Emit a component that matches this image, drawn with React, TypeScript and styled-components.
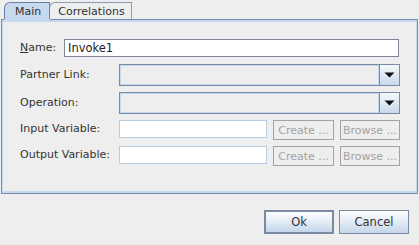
import styled, { createGlobalStyle } from 'styled-components';

const Global = createGlobalStyle`
  html, body {
    margin: 0;
    padding: 0;
    background: #eeeeee;
    font-family: 'DejaVu Sans', 'Liberation Sans', sans-serif;
    font-size: 11px;
    color: #333333;
  }
`;

const Dialog = styled.div`
  width: 419px;
  height: 245px;
  display: flex;
  flex-direction: column;
  padding: 2px 1px 0 1px;
  box-sizing: border-box;
`;

const TabStrip = styled.div`
  display: flex;
  align-items: flex-end;
  height: 17px;
  padding-left: 3px;
`;

const Tab = styled.div<{ $active?: boolean }>`
  position: relative;
  height: 17px;
  box-sizing: border-box;
  padding: 0 ${(p) => (p.$active ? 8 : 6)}px 0 ${(p) => (p.$active ? 10 : 8)}px;
  display: flex;
  align-items: center;
  border: 1px solid ${(p) => (p.$active ? '#6b7fa8' : '#8c9bb3')};
  border-bottom: none;
  border-top-left-radius: 6px 6px;
  background: ${(p) => (p.$active ? '#c6d9ef' : '#eeeeee')};
  color: #333333;
  font-size: 11px;
  margin-right: -1px;
  z-index: ${(p) => (p.$active ? 2 : 1)};
  ${(p) => p.$active && `
    &::after {
      content: '';
      position: absolute;
      left: -1px;
      right: -1px;
      bottom: -3px;
      height: 3px;
      background: #c6d9ef;
    }
  `}
`;

const Panel = styled.div`
  height: 175px;
  border: 1px solid #7a8cab;
  box-shadow: inset 1px 1px 0 #c6d9ef, inset 0 2px 0 #c6d9ef, inset -1px -1px 0 #c6d9ef, inset 0 -2px 0 #c6d9ef;
  box-sizing: border-box;
  padding: 19px 17px 0 18px;
  display: flex;
  flex-direction: column;
  gap: 6px;
`;

const Row = styled.div<{ $h: number }>`
  display: flex;
  align-items: flex-start;
  height: ${(p) => p.$h}px;
`;

const Label = styled.div<{ $w?: number; $h: number }>`
  width: ${(p) => p.$w ?? 99}px;
  height: ${(p) => p.$h}px;
  line-height: ${(p) => p.$h}px;
  flex: none;
  color: #333333;
  white-space: nowrap;
`;

const Mnemonic = styled.span`
  text-decoration: underline;
`;

const TextField = styled.div<{ $dark?: boolean; $w?: number }>`
  height: 18px;
  box-sizing: border-box;
  background: #ffffff;
  border: 1px solid ${(p) => (p.$dark ? '#7c8594' : '#b6cde6')};
  ${(p) => (p.$w ? `width: ${p.$w}px; flex: none;` : 'flex: 1;')}
  padding: 0 3px;
  display: flex;
  align-items: center;
  color: #222222;
  font-size: 11.5px;
`;

const Combo = styled.div`
  flex: 1;
  height: 22px;
  box-sizing: border-box;
  border: 1px solid #7a8aa2;
  display: flex;
`;

const ComboBody = styled.div`
  flex: 1;
  border: 1px solid #c3d7ed;
  background: #eeeeee;
`;

const ComboButton = styled.div`
  width: 19px;
  flex: none;
  border-left: 1px solid #7a8aa2;
  background: linear-gradient(#f4f8fc, #c9d9ea);
  display: flex;
  align-items: center;
  justify-content: center;
`;

const SmallButton = styled.div<{ $w: number; $gap: number }>`
  width: ${(p) => p.$w}px;
  height: 20px;
  box-sizing: border-box;
  margin-left: ${(p) => p.$gap}px;
  border: 1px solid #a3a3a3;
  color: #a3a3a3;
  display: flex;
  align-items: center;
  justify-content: center;
  flex: none;
  white-space: nowrap;
`;

const Footer = styled.div`
  display: flex;
  justify-content: flex-end;
  gap: 5px;
  padding: 16px 9px 0 0;
`;

const DialogButton = styled.div<{ $default?: boolean }>`
  width: 70px;
  height: 24px;
  box-sizing: border-box;
  border: ${(p) => (p.$default ? '2px solid #7a8aa0' : '1px solid #7a8aa2')};
  background: linear-gradient(#ffffff, #c5d6ea);
  display: flex;
  align-items: center;
  justify-content: center;
  color: #333333;
  font-size: 11.5px;
`;

const Arrow = () => (
  <svg width="11" height="6" viewBox="0 0 11 6">
    <path d="M0.5 0.5 H10.5 L5.5 5.5 Z" fill="#111" />
  </svg>
);

const ComboBox = () => (
  <Combo>
    <ComboBody />
    <ComboButton><Arrow /></ComboButton>
  </Combo>
);

const VarRow = ({ label }: { label: string }) => (
  <Row $h={20}>
    <Label $h={18}>{label}</Label>
    <TextField $w={148} />
    <SmallButton $w={61} $gap={6}>Create ...</SmallButton>
    <SmallButton $w={60} $gap={6}>Browse ...</SmallButton>
  </Row>
);

export default function App() {
  return (
    <Dialog>
      <Global />
      <TabStrip>
        <Tab $active>Main</Tab>
        <Tab>Correlations</Tab>
      </TabStrip>
      <Panel>
        <Row $h={18} style={{ marginBottom: 1 }}>
          <Label $w={44} $h={18}><Mnemonic>N</Mnemonic>ame:</Label>
          <TextField $dark style={{ marginRight: 1 }}>Invoke1</TextField>
        </Row>
        <Row $h={22}>
          <Label $h={22}>Partner Link:</Label>
          <ComboBox />
        </Row>
        <Row $h={22}>
          <Label $h={22}>Operation:</Label>
          <ComboBox />
        </Row>
        <VarRow label="Input Variable:" />
        <VarRow label="Output Variable:" />
      </Panel>
      <Footer>
        <DialogButton $default>Ok</DialogButton>
        <DialogButton>Cancel</DialogButton>
      </Footer>
    </Dialog>
  );
}
